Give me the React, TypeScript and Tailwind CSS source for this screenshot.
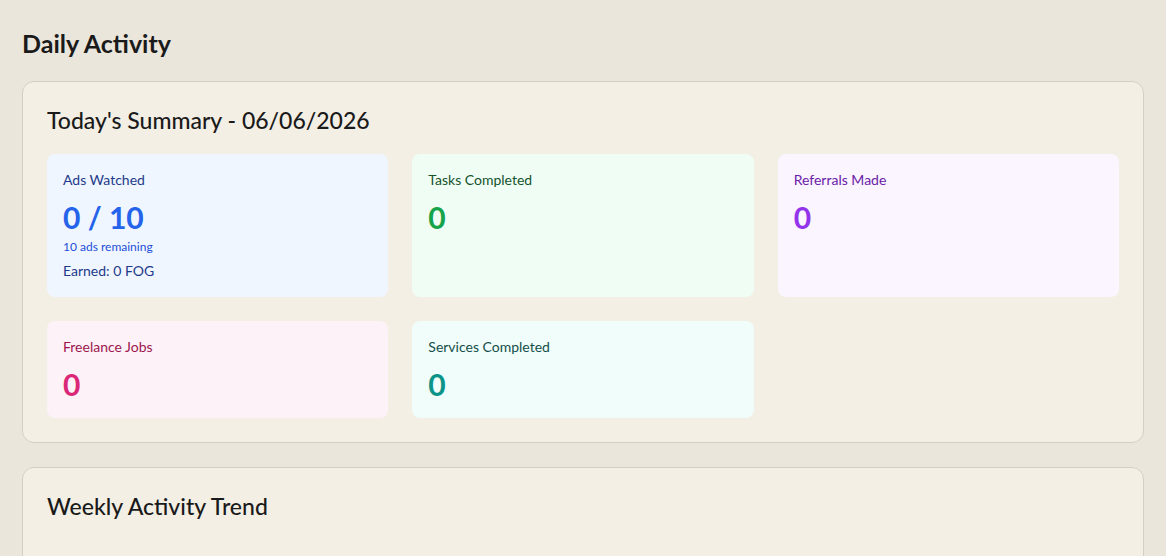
import React from "react";

type Stat = {
  label: string;
  value: string;
  bg: string;
  labelColor: string;
  valueColor: string;
  extra?: React.ReactNode;
};

const stats: Stat[] = [
  {
    label: "Ads Watched",
    value: "0 / 10",
    bg: "bg-[#eff6ff]",
    labelColor: "text-[#1e3a8a]",
    valueColor: "text-[#2563eb]",
    extra: (
      <>
        <p className="mt-1 text-xs text-[#1d4ed8]">10 ads remaining</p>
        <p className="mt-1.5 text-sm text-[#1e3a8a]">Earned: 0 FOG</p>
      </>
    ),
  },
  { label: "Tasks Completed", value: "0", bg: "bg-[#f0fdf4]", labelColor: "text-[#14532d]", valueColor: "text-[#16a34a]" },
  { label: "Referrals Made", value: "0", bg: "bg-[#faf5ff]", labelColor: "text-[#6b21a8]", valueColor: "text-[#9333ea]" },
  { label: "Freelance Jobs", value: "0", bg: "bg-[#fdf2f8]", labelColor: "text-[#9d174d]", valueColor: "text-[#db2777]" },
  { label: "Services Completed", value: "0", bg: "bg-[#f0fdfa]", labelColor: "text-[#134e4a]", valueColor: "text-[#0d9488]" },
];

const StatCard = ({ stat }: { stat: Stat }) => (
  <div className={`${stat.bg} rounded-lg p-4`}>
    <p className={`text-sm ${stat.labelColor}`}>{stat.label}</p>
    <p className={`mt-[9px] text-3xl font-bold ${stat.valueColor}`}>{stat.value}</p>
    {stat.extra}
  </div>
);

const App = () => {
  return (
    <div
      className="min-h-screen bg-[#ebe6dc] px-[22px] pt-[27px] text-[#1a1a1a]"
      style={{ fontFamily: 'Lato, "Noto Sans", sans-serif' }}
    >
      <h1 className="mb-[22px] text-[25px] leading-8 font-bold">Daily Activity</h1>

      <section className="rounded-xl border border-[#d5cfc3] bg-[#f3efe5] px-6 pt-[22px] pb-6">
        <h2 className="mb-[18px] text-[23px] leading-8 font-medium">Today's Summary - 06/06/2026</h2>
        <div className="grid grid-cols-3 gap-6">
          {stats.map((s) => (
            <StatCard key={s.label} stat={s} />
          ))}
        </div>
      </section>

      <section className="mt-6 rounded-xl border border-[#d5cfc3] bg-[#f3efe5] px-6 pt-[22px] pb-6">
        <h2 className="text-[23px] leading-8 font-medium">Weekly Activity Trend</h2>
        <div className="h-40" />
      </section>
    </div>
  );
};

export default App;
